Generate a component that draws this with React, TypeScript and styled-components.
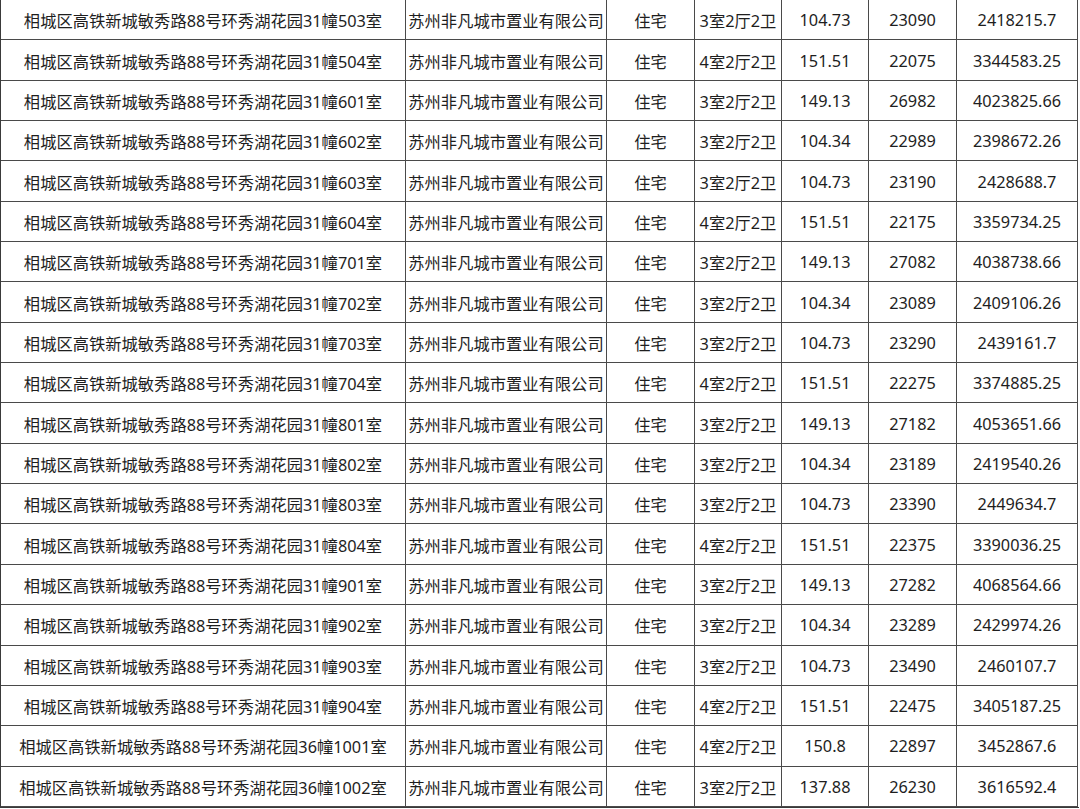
import React from 'react';
import styled, { createGlobalStyle } from 'styled-components';

interface IRow {
  address: string;
  company: string;
  usage: string;
  layout: string;
  area: string;
  price: string;
  total: string;
}

const ADDR = '相城区高铁新城敏秀路88号环秀湖花园';
const COMPANY = '苏州非凡城市置业有限公司';

const raw: [string, string, string, string, string][] = [
  ['31幢503室', '3室2厅2卫', '104.73', '23090', '2418215.7'],
  ['31幢504室', '4室2厅2卫', '151.51', '22075', '3344583.25'],
  ['31幢601室', '3室2厅2卫', '149.13', '26982', '4023825.66'],
  ['31幢602室', '3室2厅2卫', '104.34', '22989', '2398672.26'],
  ['31幢603室', '3室2厅2卫', '104.73', '23190', '2428688.7'],
  ['31幢604室', '4室2厅2卫', '151.51', '22175', '3359734.25'],
  ['31幢701室', '3室2厅2卫', '149.13', '27082', '4038738.66'],
  ['31幢702室', '3室2厅2卫', '104.34', '23089', '2409106.26'],
  ['31幢703室', '3室2厅2卫', '104.73', '23290', '2439161.7'],
  ['31幢704室', '4室2厅2卫', '151.51', '22275', '3374885.25'],
  ['31幢801室', '3室2厅2卫', '149.13', '27182', '4053651.66'],
  ['31幢802室', '3室2厅2卫', '104.34', '23189', '2419540.26'],
  ['31幢803室', '3室2厅2卫', '104.73', '23390', '2449634.7'],
  ['31幢804室', '4室2厅2卫', '151.51', '22375', '3390036.25'],
  ['31幢901室', '3室2厅2卫', '149.13', '27282', '4068564.66'],
  ['31幢902室', '3室2厅2卫', '104.34', '23289', '2429974.26'],
  ['31幢903室', '3室2厅2卫', '104.73', '23490', '2460107.7'],
  ['31幢904室', '4室2厅2卫', '151.51', '22475', '3405187.25'],
  ['36幢1001室', '4室2厅2卫', '150.8', '22897', '3452867.6'],
  ['36幢1002室', '3室2厅2卫', '137.88', '26230', '3616592.4'],
];

const rows: IRow[] = raw.map(([unit, layout, area, price, total]) => ({
  address: ADDR + unit,
  company: COMPANY,
  usage: '住宅',
  layout,
  area,
  price,
  total,
}));

function App() {
  return (
    <>
      <GlobalStyle />
      <Table>
        {rows.map((r, i) => (
          <React.Fragment key={i}>
            <Cell>{r.address}</Cell>
            <Cell>{r.company}</Cell>
            <Cell>{r.usage}</Cell>
            <Cell>{r.layout}</Cell>
            <Cell>{r.area}</Cell>
            <Cell>{r.price}</Cell>
            <Cell>{r.total}</Cell>
          </React.Fragment>
        ))}
      </Table>
    </>
  );
}

const GlobalStyle = createGlobalStyle`
  html, body {
    margin: 0;
    padding: 0;
    background: #fff;
    overflow: hidden;
  }
  body {
    font-family: "Noto Sans", "Noto Sans CJK SC", sans-serif;
  }
`;

const Table = styled.div`
  display: grid;
  grid-template-columns: 405px 201px 88px 87px 87px 88px 121px;
  grid-auto-rows: 40.35px;
  width: 1078px;
  border-left: 1px solid #3a3a3a;
  border-bottom: 1px solid #3a3a3a;
  margin-top: -1px;
  border-top: 1px solid transparent;
`;

const Cell = styled.div`
  box-sizing: border-box;
  display: flex;
  align-items: center;
  justify-content: center;
  white-space: nowrap;
  border-right: 1px solid #4a4a4a;
  border-bottom: 1px solid #4a4a4a;
  font-size: 16.3px;
  color: #1e1e1e;
  padding-top: 1px;
`;

export default App;
